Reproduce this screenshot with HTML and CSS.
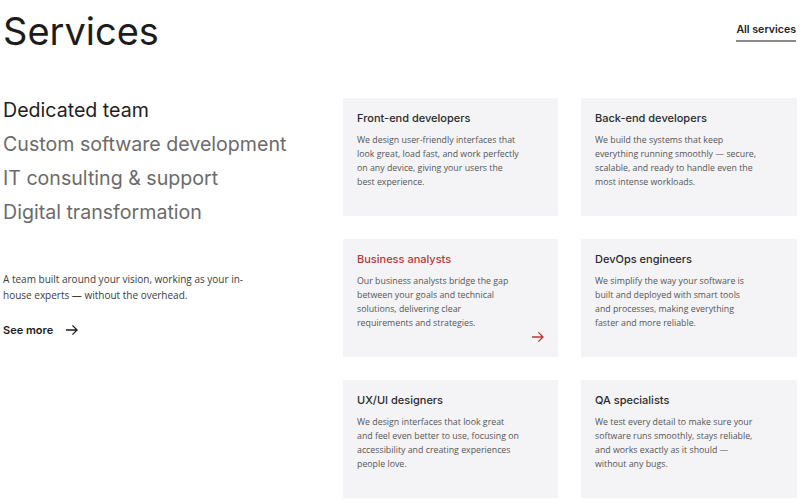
FILE: index.html
```html
<!DOCTYPE html>
<html lang="en">
<head>
  <meta charset="UTF-8">
  <meta name="viewport" content="width=device-width, initial-scale=1.0">
  <title>Services</title>
  <link rel="stylesheet" href="styles.css">
</head>
<body>
  <header class="top">
    <h1>Services</h1>
    <a class="all-link" href="#">All services</a>
  </header>

  <main class="layout">
    <section class="side">
      <ul class="tabs">
        <li class="active">Dedicated team</li>
        <li>Custom software development</li>
        <li>IT consulting &amp; support</li>
        <li>Digital transformation</li>
      </ul>
      <p class="lead">A team built around your vision, working as your in-house experts — without the overhead.</p>
      <a class="more" href="#">See more
        <svg width="13" height="12" viewBox="0 0 14 12" fill="none" stroke="currentColor" stroke-width="1.4"><path d="M1 6h12M8 1l5 5-5 5"/></svg>
      </a>
    </section>

    <section class="cards">
      <div class="card">
        <h3>Front-end developers</h3>
        <p>We design user-friendly interfaces that look great, load fast, and work perfectly on any device, giving your users the best experience.</p>
      </div>
      <div class="card">
        <h3>Back-end developers</h3>
        <p>We build the systems that keep everything running smoothly — secure, scalable, and ready to handle even the most intense workloads.</p>
      </div>
      <div class="card hot">
        <h3>Business analysts</h3>
        <p>Our business analysts bridge the gap between your goals and technical solutions, delivering clear requirements and strategies.</p>
        <svg class="go" width="13" height="12" viewBox="0 0 14 12" fill="none" stroke="currentColor" stroke-width="1.4"><path d="M1 6h12M8 1l5 5-5 5"/></svg>
      </div>
      <div class="card">
        <h3>DevOps engineers</h3>
        <p>We simplify the way your software is built and deployed with smart tools and processes, making everything faster and more reliable.</p>
      </div>
      <div class="card">
        <h3>UX/UI designers</h3>
        <p>We design interfaces that look great and feel even better to use, focusing on accessibility and creating experiences people love.</p>
      </div>
      <div class="card">
        <h3>QA specialists</h3>
        <p>We test every detail to make sure your software runs smoothly, stays reliable, and works exactly as it should — without any bugs.</p>
      </div>
    </section>
  </main>
</body>
</html>
```

FILE: styles.css
```css
body {
  margin: 0;
  font-family: Inter, "Noto Sans", sans-serif;
  color: #1c1c1c;
  background: #fff;
}
.top {
  display: flex;
  justify-content: space-between;
  align-items: flex-start;
  padding: 0 4px 0 3px;
}
h1 {
  margin: 8px 0 0;
  font-size: 38px;
  font-weight: 400;
  line-height: 46px;
}
.all-link {
  margin-top: 23px;
  padding-bottom: 4px;
  border-bottom: 2px solid #8a8a8a;
  font-size: 10.6px;
  font-weight: 600;
  color: #222;
  text-decoration: none;
}
.layout {
  display: flex;
  margin-top: 44px;
}
.side {
  width: 340px;
  padding-left: 3px;
}
.tabs {
  list-style: none;
  margin: -5px 0 0;
  padding: 0;
}
.tabs li {
  font-size: 19.6px;
  line-height: 34px;
  color: #6b6b6b;
}
.tabs li.active {
  color: #1e1e1e;
}
.lead {
  width: 250px;
  margin: 42px 0 0;
  font-family: "Open Sans", sans-serif;
  font-size: 10px;
  line-height: 16px;
  color: #3c3c3c;
}
.more {
  display: inline-flex;
  align-items: center;
  gap: 12px;
  margin-top: 20px;
  font-size: 11px;
  font-weight: 600;
  color: #1c1c1c;
  text-decoration: none;
}
.cards {
  display: grid;
  grid-template-columns: 215px 216px;
  grid-auto-rows: 118px;
  column-gap: 23px;
  row-gap: 23px;
}
.card {
  position: relative;
  background: #f4f4f6;
  padding: 13px 14px;
}
.card h3 {
  margin: 0 0 8px;
  font-size: 11px;
  font-weight: 500;
  color: #2a2a2a;
}
.card p {
  max-width: 162px;
  margin: 0;
  font-family: "Open Sans", sans-serif;
  font-size: 8.8px;
  line-height: 14px;
  color: #555;
}
.card.hot h3 {
  color: #b23a3a;
}
.go {
  position: absolute;
  right: 14px;
  bottom: 14px;
  color: #b23a3a;
}
```
